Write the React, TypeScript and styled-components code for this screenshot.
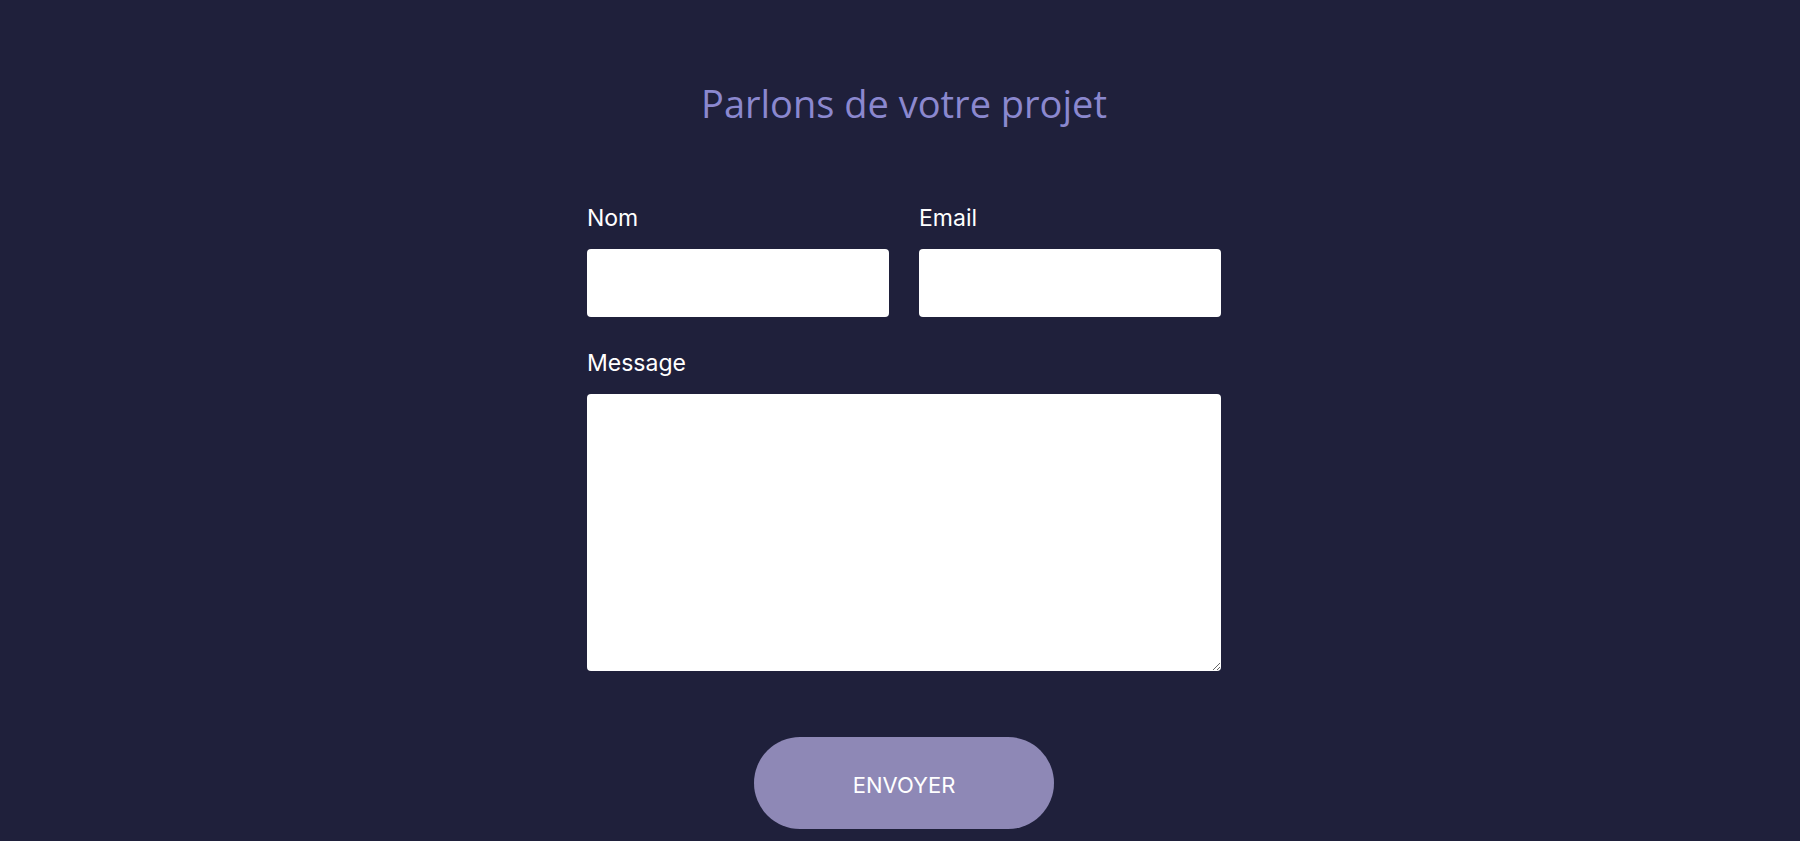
import React from "react";
import styled, { createGlobalStyle } from "styled-components";

const Global = createGlobalStyle`
  html, body { margin: 0; padding: 0; background: #1f203b; }
  * { box-sizing: border-box; }
`;

const Page = styled.main`
  min-height: 841px;
  display: flex;
  flex-direction: column;
  align-items: center;
  padding: 80px 0 0 8px;
`;

const Title = styled.h1`
  margin: 0;
  font-family: "Open Sans", sans-serif;
  font-weight: 500;
  font-size: 38px;
  line-height: 46px;
  color: #8b88cf;
`;

const Form = styled.form`
  width: 634px;
  margin-top: 78px;
  display: flex;
  flex-direction: column;
  align-items: stretch;
`;

const Row = styled.div`
  display: grid;
  grid-template-columns: 1fr 1fr;
  column-gap: 30px;
`;

const Field = styled.div<{ $mt?: number }>`
  display: flex;
  flex-direction: column;
  margin-top: ${(p) => p.$mt ?? 0}px;
`;

const Label = styled.label`
  font-family: Inter, sans-serif;
  font-size: 23px;
  line-height: 28px;
  color: #ffffff;
  margin-bottom: 17px;
`;

const Input = styled.input`
  height: 68px;
  border: none;
  border-radius: 4px;
  background: #ffffff;
  padding: 0 12px;
  font-size: 18px;
  outline: none;
`;

const TextArea = styled.textarea`
  height: 277px;
  border: none;
  border-radius: 4px;
  background: #ffffff;
  padding: 12px;
  font-size: 18px;
  outline: none;
`;

const Submit = styled.button`
  align-self: center;
  margin-top: 66px;
  width: 300px;
  height: 92px;
  padding-top: 4px;
  border: none;
  border-radius: 46px;
  background: #8e88b6;
  color: #ffffff;
  font-family: Inter, sans-serif;
  font-size: 22px;
  cursor: pointer;
`;

export default function App() {
  return (
    <>
      <Global />
      <Page>
        <Title>Parlons de votre projet</Title>
        <Form onSubmit={(e) => e.preventDefault()}>
          <Row>
            <Field>
              <Label htmlFor="nom">Nom</Label>
              <Input id="nom" type="text" />
            </Field>
            <Field>
              <Label htmlFor="email">Email</Label>
              <Input id="email" type="email" />
            </Field>
          </Row>
          <Field $mt={32}>
            <Label htmlFor="message">Message</Label>
            <TextArea id="message" />
          </Field>
          <Submit type="submit">ENVOYER</Submit>
        </Form>
      </Page>
    </>
  );
}
